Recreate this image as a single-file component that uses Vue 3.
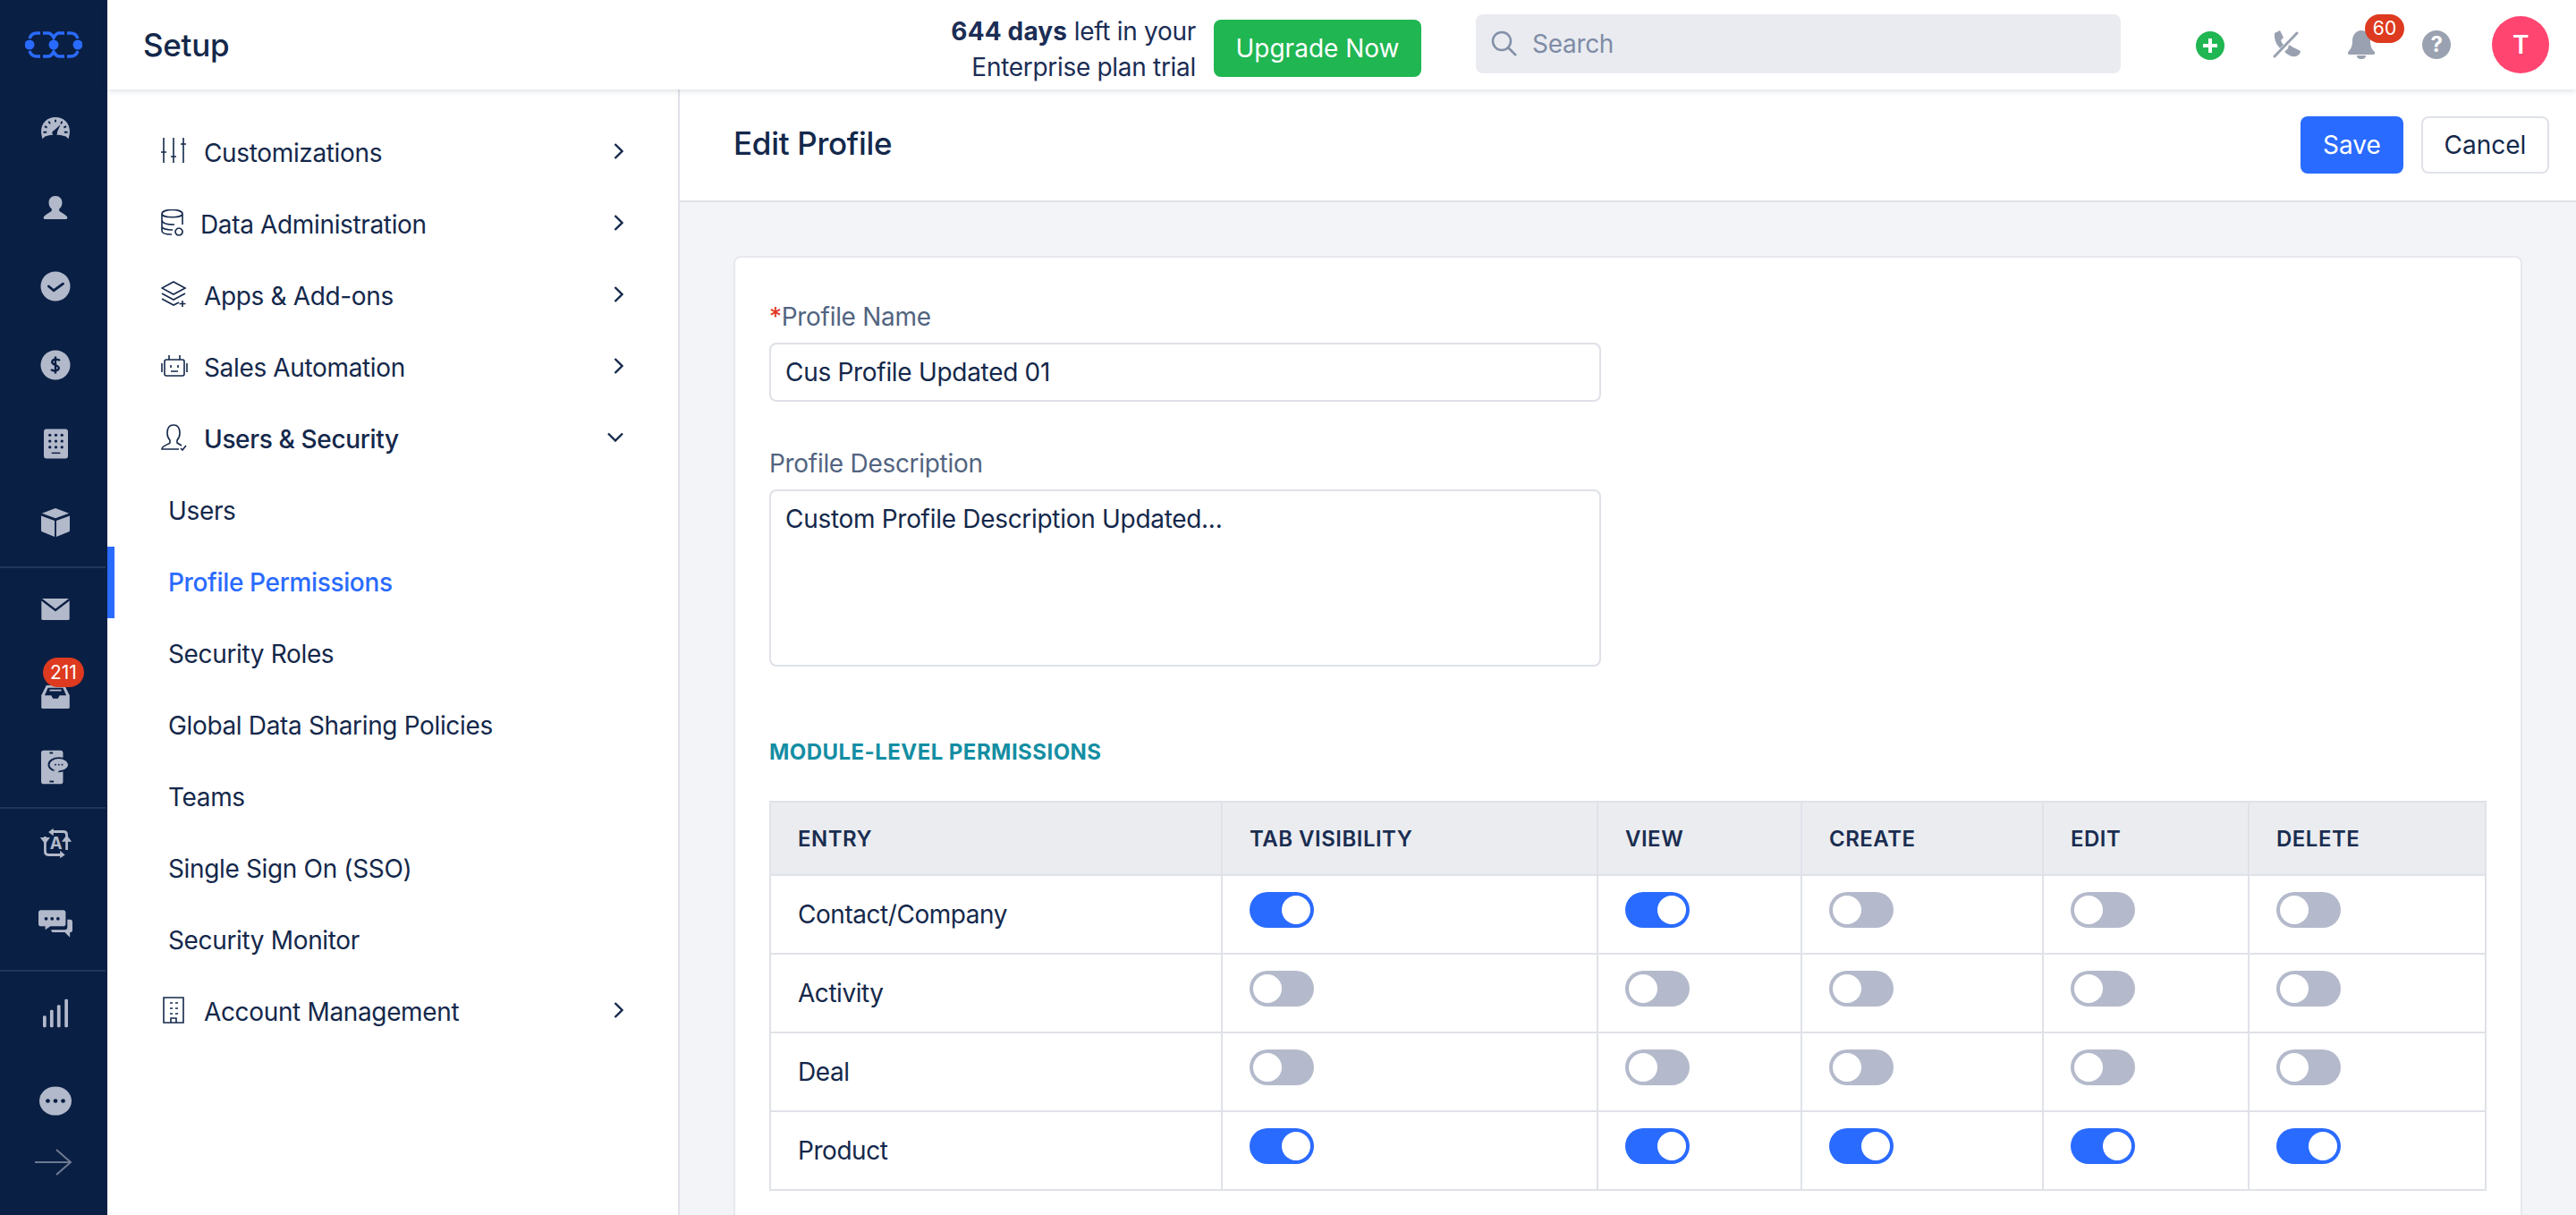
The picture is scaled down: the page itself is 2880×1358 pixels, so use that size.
<template>
  <div class="app">
    <nav class="rail">
      <div class="rail-logo">
        <svg width="64" height="32" viewBox="0 0 64 32" fill="none">
          <g stroke="#2a6bff" stroke-width="3.500">
            <path d="M17 3H13Q7 3 5 9M17 29H13Q7 29 5 23" />
            <path d="M20 3H26Q29 3 32 8Q35 3 38 3H44M20 29H26Q29 29 32 24Q35 29 38 29H44" />
            <path d="M47 3H51Q57 3 59 9M47 29H51Q57 29 59 23" />
          </g>
          <circle cx="5" cy="16" r="5.500" fill="#2a6bff" />
          <circle cx="32" cy="16" r="5.500" fill="#2a6bff" />
          <circle cx="59" cy="16" r="5.500" fill="#2a6bff" />
        </svg>
      </div>
      <div class="rail-group first">
        <div class="rail-icon">
          <svg width="34" height="30" viewBox="0 0 36 32"><path fill="#b2b9ca" d="M18 2C8 2 1 9 1 19c0 3 .6 5 1.500 9l3-3q12-4 25 0l3 3c1-4 1.500-6 1.500-9C35 9 28 2 18 2z" /><path stroke="#0a1f44" stroke-width="2" d="M18 5v3M10 7l1.500 3M26 7l-1.500 3M5 13l3 1.500M31 13l-3 1.500M3.500 20h4M28.500 20h4" /><path fill="#0a1f44" d="M24 11l-4 9a3 3 0 1 1-4-2z" /></svg>
        </div>
        <div class="rail-icon">
          <svg width="28" height="28" viewBox="0 0 30 30"><path fill="#b2b9ca" d="M15 1c-5 0-8 3.500-8 8 0 3.500 1.500 6 3.500 7.500V19C8 21.500 3 23 1 26c-.8 1.500 0 3 1.500 3h25c1.500 0 2.300-1.500 1.500-3-2-3-7-4.500-9.500-7v-2.500c2-1.500 3.500-4 3.500-7.500 0-4.500-3-8-8-8z" /></svg>
        </div>
        <div class="rail-icon">
          <svg width="34" height="34" viewBox="0 0 36 36"><circle cx="18" cy="18" r="17.500" fill="#b2b9ca" /><path fill="none" stroke="#0a1f44" stroke-width="3" stroke-linecap="round" d="M10 18l6 5 11-8" /></svg>
        </div>
        <div class="rail-icon">
          <svg width="34" height="34" viewBox="0 0 36 36"><circle cx="18" cy="18" r="17.500" fill="#b2b9ca" /><path fill="none" stroke="#0a1f44" stroke-width="2.500" d="M23 13c-1-2-8-3-9 1s9 4 8 8-8 3-9 1M18 8v20" /></svg>
        </div>
        <div class="rail-icon">
          <svg width="27" height="34" viewBox="0 0 28 34"><rect width="28" height="34" rx="3" fill="#b2b9ca" /><g fill="#0a1f44"><circle cx="7" cy="7" r="1.700" /><circle cx="14" cy="7" r="1.700" /><circle cx="21" cy="7" r="1.700" /><circle cx="7" cy="14" r="1.700" /><circle cx="14" cy="14" r="1.700" /><circle cx="21" cy="14" r="1.700" /><circle cx="7" cy="21" r="1.700" /><circle cx="14" cy="21" r="1.700" /><circle cx="21" cy="21" r="1.700" /><rect x="9" y="27" width="10" height="1.500" /></g></svg>
        </div>
        <div class="rail-icon">
          <svg width="32" height="32" viewBox="0 0 34 34"><path fill="#b2b9ca" d="M17 0l16 6-16 6L1 6zM0 9l16 6v19L1 28q-1-.5-1-2zM34 9L18 15v19l15-6q1-.5 1-2z" /></svg>
        </div>
      </div>
      <div class="rail-group second">
        <div class="rail-icon">
          <svg width="32" height="24" viewBox="0 0 34 26"><rect width="34" height="26" rx="2" fill="#b2b9ca" /><path fill="none" stroke="#0a1f44" stroke-width="2.500" d="M0 1l17 13L34 1" /></svg>
        </div>
        <div class="rail-icon inbox">
          <svg width="32" height="26" viewBox="0 0 34 28"><path fill="#b2b9ca" d="M6 0h22l6 12v14a2 2 0 0 1-2 2H2a2 2 0 0 1-2-2V12z" /><path fill="#0a1f44" d="M8 3h18l4 9h-8l-2 4h-6l-2-4H4z" /><rect x="10" y="5" width="14" height="2" fill="#b2b9ca" /></svg>
          <span class="rail-badge">211</span>
        </div>
        <div class="rail-icon">
          <svg width="32" height="39" viewBox="0 0 34 40"><path fill="#b2b9ca" d="M3 0h20a3 3 0 0 1 3 3v34a3 3 0 0 1-3 3H3a3 3 0 0 1-3-3V3a3 3 0 0 1 3-3z" /><ellipse cx="21" cy="17" rx="12" ry="8" fill="#b2b9ca" stroke="#0a1f44" stroke-width="2" /><path fill="#b2b9ca" d="M15 23l1 6 6-5z" /><g fill="#0a1f44"><circle cx="17" cy="17" r="1" /><circle cx="21" cy="17" r="1" /><circle cx="25" cy="17" r="1" /><rect x="10" y="2" width="4" height="2" /><rect x="10" y="36" width="5" height="2" /></g></svg>
        </div>
      </div>
      <div class="rail-group third">
        <div class="rail-icon">
          <svg width="39" height="37" viewBox="0 0 42 36" fill="none"><g stroke="#b2b9ca" stroke-width="3"><path d="M15 4h15q4 0 4 4v18" /><path d="M8 10v18q0 4 4 4h16" /></g><g fill="#b2b9ca"><path d="M18 0v9l-6-4.500zM34 8l6 8H28zM2 11h12L8 19zM26 27l6 5-6 4z" /></g><text x="21" y="25" text-anchor="middle" class="rail-a">A</text></svg>
        </div>
        <div class="rail-icon">
          <svg width="38" height="31" viewBox="0 0 40 32"><path fill="#b2b9ca" d="M3 0h26a3 3 0 0 1 3 3v13a3 3 0 0 1-3 3H14l-6 4v-4H3a3 3 0 0 1-3-3V3a3 3 0 0 1 3-3z" /><path fill="#b2b9ca" d="M34 11h3a3 3 0 0 1 3 3v9a3 3 0 0 1-3 3v6l-6-6H18q-3 0-3-3h16q3 0 3-3z" /><g fill="#0a1f44"><circle cx="9" cy="10" r="2" /><circle cx="16" cy="10" r="2" /><circle cx="23" cy="10" r="2" /></g></svg>
        </div>
      </div>
      <div class="rail-group fourth">
        <div class="rail-icon">
          <svg width="28" height="33" viewBox="0 0 30 34"><g fill="#b2b9ca"><rect y="20" width="4" height="14" rx="1.500" /><rect x="8.500" y="13" width="4" height="21" rx="1.500" /><rect x="17" y="7" width="4" height="27" rx="1.500" /><rect x="26" y="0" width="4" height="34" rx="1.500" /></g></svg>
        </div>
      </div>
      <div class="rail-foot">
        <svg width="36" height="35" viewBox="0 0 38 34"><ellipse cx="19" cy="17" rx="19" ry="17" fill="#b2b9ca" /><g fill="#0a1f44"><circle cx="10" cy="17" r="2.500" /><circle cx="19" cy="17" r="2.500" /><circle cx="28" cy="17" r="2.500" /></g></svg>
        <svg class="rail-arrow" width="42" height="30" viewBox="0 0 42 30" fill="none"><path stroke="#6d7a90" stroke-width="2" d="M0 15h39M24 1l16 14-16 14" /></svg>
      </div>
    </nav>

    <div class="content">
      <header class="topbar">
        <div class="title">Setup</div>
        <div class="trial"><b>644 days</b> left in your<br />Enterprise plan trial</div>
        <button class="upgrade">Upgrade Now</button>
        <div class="search">
          <svg width="30" height="30" viewBox="0 0 30 30" fill="none"><circle cx="12" cy="12" r="10" stroke="#8290a8" stroke-width="2.500" /><path stroke="#8290a8" stroke-width="2.500" d="M19 19l9 9" /></svg>
          <span>Search</span>
        </div>
        <div class="top-icons">
          <svg class="t-plus" width="32" height="32" viewBox="0 0 32 32"><circle cx="16" cy="16" r="16" fill="#20b652" /><path stroke="#fff" stroke-width="4" d="M16 8v16M8 16h16" /></svg>
          <svg class="t-phone" width="32" height="32" viewBox="0 0 32 32"><path fill="#9aa1b1" d="M2 3l6-3 4 8-3 3q1 3 3 5l-4 4Q1 13 2 3zM18 16l5 3 8 4q0 3-3 5-5 3-11-1l-4-3 4-4z" /><path stroke="#9aa1b1" stroke-width="3" stroke-linecap="round" d="M2 29L27 3" /></svg>
          <div class="t-bell">
            <svg width="30" height="32" viewBox="0 0 30 32"><path fill="#9aa1b1" d="M15 0c-6 0-10 5-10 12 0 6-2 9-4 11-2 2-1 4 1 4h26c2 0 3-2 1-4-2-2-4-5-4-11 0-7-4-12-10-12zM10 28h10c0 3-2 4-5 4s-5-1-5-4z" /></svg>
            <span class="bell-badge">60</span>
          </div>
          <svg class="t-help" width="32" height="32" viewBox="0 0 32 32"><circle cx="16" cy="16" r="16" fill="#9aa1b1" /><text x="16" y="24" text-anchor="middle" class="help-q">?</text></svg>
          <div class="avatar">T</div>
        </div>
      </header>

      <div class="body">
        <aside class="menu">
          <div v-for="item in menu" :key="item.label" class="menu-row" :class="{ sub: item.sub, active: item.active, open: item.open }">
            <svg v-if="item.icon" class="menu-icon" width="30" height="30" viewBox="0 0 30 30" fill="none" stroke="#14284b" stroke-width="1.600">
              <path :d="item.icon" />
            </svg>
            <span :class="{ tight: item.tight }">{{ item.label }}</span>
            <svg v-if="item.arrow" class="chev" width="11" height="18" viewBox="0 0 11 18" fill="none"><path stroke="#14284b" stroke-width="2.400" d="M1.500 1L9.500 9l-8 8" /></svg>
            <svg v-if="item.open" class="chev-down" width="18" height="11" viewBox="0 0 18 11" fill="none"><path stroke="#14284b" stroke-width="2.400" d="M1 1.500L9 9.500l8-8" /></svg>
          </div>
        </aside>

        <main class="main">
          <div class="page-head">
            <h1>Edit Profile</h1>
            <button class="save">Save</button>
            <button class="cancel">Cancel</button>
          </div>
          <div class="page-body">
            <section class="card">
              <label class="field-label"><span class="req">*</span>Profile Name</label>
              <input class="input" :value="profileName" />
              <label class="field-label desc">Profile Description</label>
              <textarea class="textarea" :value="profileDesc"></textarea>
              <h2 class="section">MODULE-LEVEL PERMISSIONS</h2>
              <table class="perm">
                <thead>
                  <tr>
                    <th v-for="col in columns" :key="col.name" :style="{ width: col.width + 'px' }">{{ col.name }}</th>
                  </tr>
                </thead>
                <tbody>
                  <tr v-for="row in rows" :key="row.name">
                    <td>{{ row.name }}</td>
                    <td v-for="(on, i) in row.flags" :key="i">
                      <span class="toggle" :class="{ on }"><i></i></span>
                    </td>
                  </tr>
                </tbody>
              </table>
            </section>
          </div>
        </main>
      </div>
    </div>
  </div>
</template>

<script setup>
const profileName = 'Cus Profile Updated 01'
const profileDesc = 'Custom Profile Description Updated...'

const menu = [
  { label: 'Customizations', arrow: true, icon: 'M3 0v28M14 0v28M25 0v28M0 16h6M11 21h6M22 7h6' },
  { label: 'Data Administration', arrow: true, tight: true, icon: 'M1 5c0-6 23-6 23 0v12M1 5c0 5 23 5 23 0M1 5v19c0 3 6 4 11 4M1 12c0 4 8 5 14 5M1 19c0 3 7 4 12 4M20 21a4 4 0 1 0 .1 0' },
  { label: 'Apps & Add-ons', arrow: true, icon: 'M14 1l13 7-13 7L1 8zM1 14l13 7 13-7M1 20l13 7 6-3M24 22v7M20.500 25.500h7' },
  { label: 'Sales Automation', arrow: true, icon: 'M6 8h18a2 2 0 0 1 2 2v14a2 2 0 0 1-2 2H6a2 2 0 0 1-2-2V10a2 2 0 0 1 2-2zM9 3v5M21 3v5M1 12v10M29 12v10M11 14v3M19 14v3M11 21h8' },
  { label: 'Users & Security', open: true, icon: 'M14 1c-5 0-7 4-7 9 0 4 1 6 3 8v3c-2 2-9 3-9 7h19M14 1c5 0 7 4 7 9 0 4-1 6-3 8v3l5 3M22 27l2 2 4-5' },
  { label: 'Users', sub: true },
  { label: 'Profile Permissions', sub: true, active: true },
  { label: 'Security Roles', sub: true },
  { label: 'Global Data Sharing Policies', sub: true },
  { label: 'Teams', sub: true },
  { label: 'Single Sign On (SSO)', sub: true },
  { label: 'Security Monitor', sub: true },
  { label: 'Account Management', arrow: true, icon: 'M3 1h22v28H3zM10 7h3M16 7h3M10 13h3M16 13h3M10 19h3M16 19h3M11 29v-5h6v5' }
]

const columns = [
  { name: 'ENTRY', width: 505 },
  { name: 'TAB VISIBILITY', width: 420 },
  { name: 'VIEW', width: 228 },
  { name: 'CREATE', width: 270 },
  { name: 'EDIT', width: 230 },
  { name: 'DELETE', width: 265 }
]

const rows = [
  { name: 'Contact/Company', flags: [true, true, false, false, false] },
  { name: 'Activity', flags: [false, false, false, false, false] },
  { name: 'Deal', flags: [false, false, false, false, false] },
  { name: 'Product', flags: [true, true, true, true, true] }
]
</script>

<style>
html, body {
  margin: 0;
  height: 100%;
  overflow: hidden;
}
</style>

<style scoped>
.app {
  display: flex;
  height: 1358px;
  font-family: Inter, "Liberation Sans", sans-serif;
  color: #14284b;
  overflow: hidden;
  letter-spacing: -0.3px;
}

.rail {
  width: 120px;
  flex: none;
  background: #0a1f44;
  display: flex;
  flex-direction: column;
}

.rail-logo {
  height: 100px;
  display: flex;
  align-items: center;
  justify-content: center;
}

.rail-group {
  border-bottom: 2px solid #22365a;
  margin-right: 2px;
  padding-left: 6px;
}

.rail-icon {
  height: 88px;
  display: flex;
  align-items: center;
  justify-content: center;
  position: relative;
}

.rail-group.first {
  padding-bottom: 5px;
}

.rail-group.second {
  padding-top: 2px;
}

.rail-group.second .rail-icon {
  height: 88.33px;
}

.rail-group.third {
  padding-bottom: 12px;
}

.rail-group.third .rail-icon {
  height: 78px;
  margin-bottom: 12px;
}

.rail-group.third .rail-icon:last-child {
  margin-bottom: 0;
}

.rail-group.fourth {
  border-bottom: 0;
}

.rail-group.fourth .rail-icon {
  height: 94px;
}

.inbox svg {
  margin-top: 20px;
}

.rail-badge {
  position: absolute;
  left: 42px;
  top: 10px;
  height: 33px;
  padding: 0 8px;
  background: #dd3a1f;
  border-radius: 17px;
  color: #fff;
  font-size: 21px;
  line-height: 33px;
  letter-spacing: 0;
}

.rail-a {
  font-size: 20px;
  font-weight: 700;
  fill: #b2b9ca;
}

.rail-foot {
  display: flex;
  flex-direction: column;
  align-items: center;
  padding: 33px 0 0 4px;
  gap: 36px;
}

.rail-arrow {
  margin-left: -4px;
}

.content {
  flex: 1;
  min-width: 0;
  display: flex;
  flex-direction: column;
}

.topbar {
  height: 100px;
  flex: none;
  display: flex;
  align-items: center;
  padding-right: 30px;
  background: #fff;
  box-shadow: 0 2px 6px rgba(20, 40, 75, 0.14);
  position: relative;
  z-index: 2;
}

.title {
  font-size: 35px;
  font-weight: 500;
  margin: 0 auto 0 40px;
}

.trial {
  font-size: 28px;
  line-height: 40px;
  text-align: right;
  margin-top: 10px;
  color: #1b2d55;
  white-space: nowrap;
}

.trial b {
  font-weight: 700;
  letter-spacing: 0.15px;
}

.upgrade {
  margin-left: 20px;
  align-self: flex-start;
  margin-top: 22px;
  width: 232px;
  height: 64px;
  border: 0;
  border-radius: 8px;
  background: #20b652;
  color: #fff;
  font: 400 28px Inter, sans-serif;
  letter-spacing: 0;
}

.search {
  margin-left: 61px;
  width: 721px;
  height: 66px;
  background: #e9ebf0;
  border-radius: 8px;
  display: flex;
  align-items: center;
  padding-left: 17px;
  gap: 16px;
  box-sizing: border-box;
  color: #7f8ca5;
  font-size: 28px;
  margin-top: -2px;
}

.top-icons {
  display: flex;
  align-items: center;
  flex: none;
  height: 100%;
}

.t-plus { margin-left: 84px; margin-top: 2px; }
.t-phone { margin-left: 54px; }
.t-bell { margin-left: 52px; position: relative; height: 32px; }
.t-help { margin-left: 53px; }

.bell-badge {
  position: absolute;
  left: 19px;
  top: -18px;
  width: 44px;
  height: 32px;
  border-radius: 16px;
  background: #dd3a1f;
  color: #fff;
  font-size: 21px;
  line-height: 32px;
  text-align: center;
  letter-spacing: 0;
}

.help-q {
  font-size: 24px;
  font-weight: 700;
  fill: #fff;
}

.avatar {
  margin-left: 46px;
  width: 64px;
  height: 64px;
  border-radius: 50%;
  background: #ff4570;
  color: #fff;
  font-size: 28px;
  font-weight: 600;
  display: flex;
  align-items: center;
  justify-content: center;
}

.body {
  flex: 1;
  display: flex;
  min-height: 0;
}

.menu {
  width: 640px;
  flex: none;
  box-sizing: border-box;
  background: #fff;
  border-right: 2px solid #e0e2e9;
  padding-top: 31px;
  letter-spacing: -0.35px;
}

.menu-row {
  height: 80px;
  display: flex;
  align-items: center;
  padding-left: 60px;
  font-size: 28px;
  position: relative;
}

.menu-row.open {
  font-weight: 500;
}

.menu-row.sub {
  padding-left: 68px;
}

.menu-row.active {
  color: #2a6bff;
  font-weight: 500;
}

.menu-row.active::before {
  content: "";
  position: absolute;
  left: 0;
  top: 0;
  bottom: 0;
  width: 8px;
  background: #2a6bff;
}

.menu-icon {
  flex: none;
  margin: -4px 18px 0 0;
}

.tight {
  margin-left: -4px;
}

.chev {
  position: absolute;
  left: 566px;
  top: 29px;
}

.chev-down {
  position: absolute;
  left: 559px;
  top: 32px;
}

.main {
  flex: 1;
  min-width: 0;
  display: flex;
  flex-direction: column;
  background: #f3f4f7;
}

.page-head {
  height: 126px;
  flex: none;
  box-sizing: border-box;
  background: #fff;
  border-bottom: 2px solid #e0e2e9;
  display: flex;
  align-items: center;
  gap: 20px;
  padding: 0 30px 0 60px;
}

.page-head h1 {
  margin: 0 auto 4px 0;
  font-size: 35px;
  font-weight: 500;
}

.save,
.cancel {
  height: 64px;
  border-radius: 8px;
  font: 400 28px Inter, sans-serif;
  box-sizing: border-box;
}

.save {
  width: 115px;
  border: 0;
  background: #2a6bff;
  color: #fff;
}

.cancel {
  width: 143px;
  border: 2px solid #e0e2e9;
  background: #fff;
  color: #14284b;
}

.page-body {
  padding: 60px 60px 0;
  flex: 1;
}

.card {
  background: #fff;
  border: 2px solid #e6e8ed;
  border-radius: 8px;
  padding: 49px 38px 0;
  width: 2000px;
  box-sizing: border-box;
  height: 1100px;
}

.field-label {
  display: block;
  font-size: 28px;
  line-height: 34px;
  color: #526480;
}

.req {
  color: #e0351e;
}

.input,
.textarea {
  display: block;
  width: 930px;
  box-sizing: border-box;
  border: 2px solid #dfe1e8;
  border-radius: 8px;
  font: 28px Inter, sans-serif;
  letter-spacing: -0.3px;
  color: #14284b;
  background: #fff;
  padding: 0 16px;
  outline: none;
}

.input {
  height: 66px;
  margin-top: 12px;
}

.desc {
  margin-top: 52px;
}

.textarea {
  height: 198px;
  margin-top: 12px;
  padding-top: 14px;
  resize: none;
}

.section {
  margin: 81px 0 39px;
  font-size: 24px;
  line-height: 30px;
  font-weight: 700;
  color: #148ea3;
  letter-spacing: 0.45px;
}

.perm {
  width: 1918px;
  border-collapse: collapse;
  table-layout: fixed;
  font-size: 28px;
  letter-spacing: -0.45px;
}

.perm th,
.perm td {
  border: 2px solid #e0e2e9;
  text-align: left;
  padding: 0 30px;
  box-sizing: border-box;
}

.perm th {
  height: 82px;
  background: #eaecf0;
  font-size: 24px;
  font-weight: 600;
  letter-spacing: 0.5px;
  color: #1a2d50;
}

.perm td {
  height: 88px;
}

.toggle {
  display: block;
  width: 72px;
  height: 40px;
  border-radius: 20px;
  background: #b4bacb;
  box-sizing: border-box;
  padding: 4px;
  margin-top: -10px;
}

.toggle i {
  display: block;
  width: 32px;
  height: 32px;
  border-radius: 50%;
  background: #fff;
}

.toggle.on {
  background: #2a6bff;
  padding-left: 36px;
}
</style>
